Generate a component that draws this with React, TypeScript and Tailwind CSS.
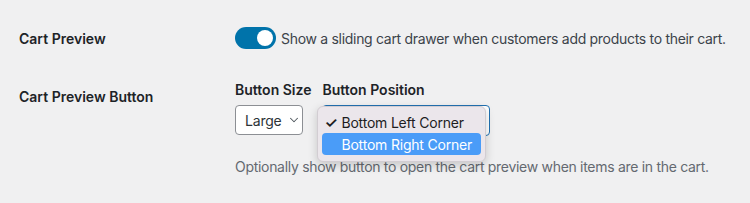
import { ChevronDown } from 'lucide-react';

const font = "font-['Inter','Liberation_Sans',sans-serif]";

export default function App() {
  return (
    <div className={`w-[750px] h-[203px] bg-[#f0f0f1] text-[#1d2327] ${font} overflow-hidden`}>
      {/* Cart Preview row */}
      <div className="flex items-center pt-[27px]">
        <div className="w-[235px] pl-[19px] text-[14px] font-semibold">Cart Preview</div>
        <div className="flex items-center gap-[5px]">
          <div className="w-[41px] h-[22px] rounded-full bg-[#0073aa] flex items-center justify-end pr-[3px]">
            <div className="w-[16px] h-[16px] rounded-full bg-white" />
          </div>
          <span className="text-[14px] tracking-[-0.3px] text-[#3c434a]">
            Show a sliding cart drawer when customers add products to their cart.
          </span>
        </div>
      </div>

      {/* Cart Preview Button row */}
      <div className="flex pt-[30px]">
        <div className="w-[235px] pl-[19px] pt-[7px] text-[14px] font-semibold">Cart Preview Button</div>
        <div className="flex flex-col">
          <div className="flex gap-[11px]">
            <div className="flex flex-col gap-[5px]">
              <span className="text-[14px] font-semibold">Button Size</span>
              <div className="w-[68px] h-[30px] bg-white border border-[#8c8f94] rounded-[4px] flex items-center pl-[9px] gap-[5px] text-[14px] tracking-[-0.2px] text-[#2c3338]">
                Large
                <ChevronDown size={14} strokeWidth={1.8} className="text-[#50575e]" />
              </div>
            </div>
            <div className="flex flex-col gap-[5px]">
              <span className="text-[14px] font-semibold">Button Position</span>
              <div className="relative w-[168px] h-[31px] bg-white border border-[#2271b1] rounded-[4px]">
                {/* open native menu */}
                <div className="absolute left-[-6px] top-[0px] w-[169px] h-[56px] bg-[#ebe6eb] rounded-[6px] border border-[#d2cdd2] shadow-[0_3px_10px_rgba(0,0,0,0.18)] px-[4px] pt-[4px] text-[14px] tracking-[-0.2px]">
                  <div className="h-[22px] flex items-center pl-[2px] text-[#1d1d1f]">
                    <span className="w-[17px] text-[15px] font-semibold leading-none">✓</span>
                    <span>Bottom Left Corner</span>
                  </div>
                  <div className="h-[22px] flex items-center pl-[19px] rounded-[4px] bg-[#4a9cf8] text-white">
                    Bottom Right Corner
                  </div>
                </div>
              </div>
            </div>
          </div>
          <p className="mt-[20px] text-[14px] tracking-[-0.3px] text-[#646970]">
            Optionally show button to open the cart preview when items are in the cart.
          </p>
        </div>
      </div>
    </div>
  );
}
